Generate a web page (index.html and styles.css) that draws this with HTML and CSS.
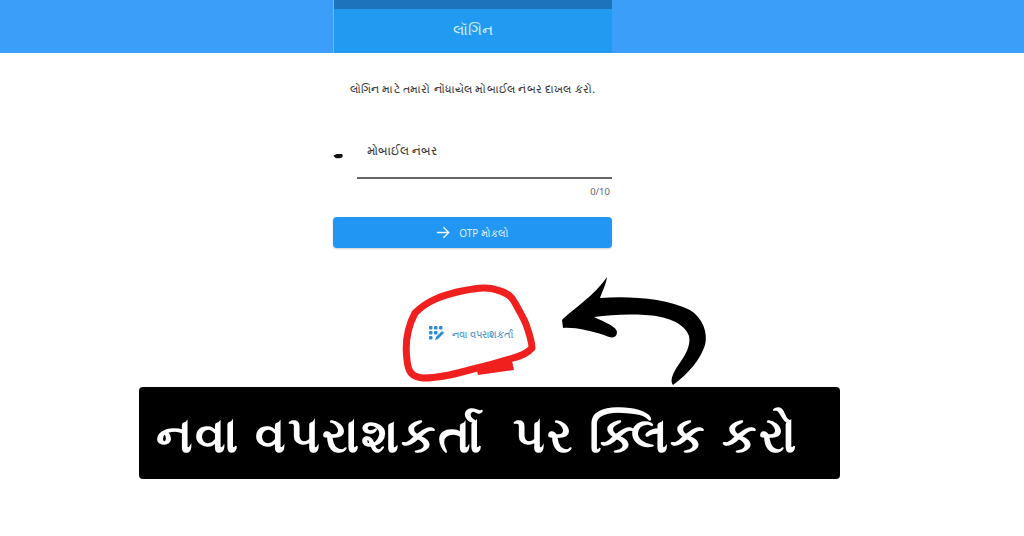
FILE: index.html
```html
<!DOCTYPE html>
<html lang="gu">
<head>
<meta charset="UTF-8">
<meta name="viewport" content="width=device-width, initial-scale=1.0">
<title>લૉગિન</title>
<link rel="stylesheet" href="styles.css">
</head>
<body>

<header class="top-band">
  <div class="app-bar">
    <div class="status-bar"></div>
    <h1 class="app-title">લૉગિન</h1>
  </div>
</header>

<main class="login">
  <p class="intro">લોગિન માટે તમારો નોંધાયેલ મોબાઈલ નંબર દાખલ કરો.</p>

  <div class="field">
    <svg class="field-icon" viewBox="0 0 12 8" aria-hidden="true"><path d="M0 3 4 1h6l1 2-1 2-3 1H3z"/></svg>
    <div class="field-box">
      <div class="field-label">મોબાઈલ નંબર</div>
    </div>
  </div>
  <div class="counter">0/10</div>

  <button class="send-btn" type="button">
    <svg viewBox="0 0 16 14" aria-hidden="true"><path d="M1 7h13M8.500 1l6 6-6 6"/></svg>
    <span>OTP મોકલો</span>
  </button>

  <a class="new-user" href="#">
    <svg viewBox="0 0 15 15" aria-hidden="true">
      <rect x="0" y="0" width="3.500" height="3.500" rx="1"/><rect x="5" y="0" width="3.500" height="3.500" rx="1"/><rect x="10" y="0" width="3.500" height="3.500" rx="1"/>
      <rect x="0" y="5" width="3.500" height="3.500" rx="1"/><rect x="5" y="5" width="3.500" height="3.500" rx="1"/>
      <rect x="0" y="10" width="3.500" height="3.500" rx="1"/>
      <path d="M6 14l1-3 6-6 2 2-6 6z"/>
    </svg>
    <span>નવા વપરાશકર્તા</span>
  </a>
</main>

<!-- annotations drawn on top of the screenshot -->
<svg class="marks" viewBox="0 0 1024 536" aria-hidden="true">
  <path class="ring" d="M477 368C455 374 440 378 423 378C412 377 408 372 407 360C405 345 406 330 415 313C428 300 442 296 457 292C472 289 486 286 497 290C508 293 512 297 515 303C521 314 525 320 527 327C530 336 532 342 532 348C527 354 520 356 513 358C500 362 490 365 477 368Z"/>
  <path class="ring-blob" d="M476 366 512 361 514 370 478 375Z"/>
  <path d="M562 320C572 310 595 295 607 277C606 285 602 292 600 298C630 296 665 298 690 310C703 318 708 333 705 345C700 360 690 372 673 385C670 381 672 375 677 367C686 355 691 345 689 336C684 322 665 316 645 315C625 314 610 315 594 317C605 322 617 327 617 332C617 338 612 339 604 335C590 331 575 327 563 328Z"/>
</svg>

<div class="banner">નવા વપરાશકર્તા  પર ક્લિક કરો</div>

</body>
</html>
```

FILE: styles.css
```css
html, body {
  margin: 0;
  height: 536px;
  overflow: hidden;
}
body {
  font-family: "Noto Sans", Roboto, "Liberation Sans", sans-serif;
  background-color: #fff;
  color: #333;
}
.top-band {
  background-color: #3b9ef8;
  height: 53px;
  padding-left: 333px;
}
.app-bar {
  width: 279px;
  height: 53px;
  background-color: #209bf1;
  border-left: 1px solid #6bb8f5;
  box-sizing: border-box;
}
.status-bar {
  height: 9px;
  background-color: #1b74bc;
}
.app-title {
  margin: 0;
  height: 44px;
  line-height: 40px;
  text-align: center;
  color: #d5ecfc;
  font-size: 15px;
  font-weight: normal;
}
.login {
  width: 279px;
  margin-left: 333px;
}
.intro {
  margin: 26px -20px 0;
  text-align: center;
  font-size: 11.200px;
  letter-spacing: 0.200px;
  line-height: 20px;
  white-space: nowrap;
}
.field {
  display: flex;
  align-items: flex-start;
  margin-top: 35px;
}
.field-icon {
  width: 11px;
  height: 7px;
  margin: 19px 13px 0 0;
  fill: #111;
}
.field-box {
  flex: 1;
  height: 45px;
  box-sizing: border-box;
  padding: 7px 0 0 10px;
  border-bottom: 2px solid #666;
}
.field-label {
  font-size: 12px;
  line-height: 20px;
}
.counter {
  margin-top: 6px;
  text-align: right;
  font-size: 9.500px;
  line-height: 14px;
  color: #666;
  padding-right: 2px;
}
.send-btn {
  display: flex;
  width: 100%;
  height: 31px;
  margin-top: 18px;
  padding: 0;
  align-items: center;
  justify-content: center;
  gap: 9px;
  border: none;
  border-radius: 4px;
  background-color: #2196f3;
  box-shadow: 0 1px 2px rgba(0, 0, 0, 0.2);
  color: #dff0fd;
  font-family: inherit;
  font-size: 10px;
}
.send-btn svg {
  width: 14px;
  height: 13px;
  fill: none;
  stroke: #eef7fe;
  stroke-width: 1.600;
}
.new-user {
  display: flex;
  align-items: center;
  justify-content: center;
  gap: 8px;
  margin: 78px 0 0 -3px;
  color: #3f8fc9;
  font-size: 10px;
  text-decoration: none;
}
.new-user svg {
  width: 15px;
  height: 15px;
  fill: #2b8bd6;
}
.marks {
  position: absolute;
  left: 0;
  top: 0;
  width: 1024px;
  height: 536px;
}
.ring {
  fill: none;
  stroke: #f0201f;
  stroke-width: 7;
  stroke-linejoin: round;
}
.ring-blob {
  fill: #f0201f;
}
.banner {
  position: absolute;
  left: 139px;
  top: 387px;
  width: 701px;
  height: 92px;
  box-sizing: border-box;
  padding-left: 17px;
  background-color: #000;
  border-radius: 4px;
  color: #fff;
  font-size: 49px;
  letter-spacing: 2px;
  font-weight: bold;
  line-height: 92px;
  white-space: pre;
}
```
